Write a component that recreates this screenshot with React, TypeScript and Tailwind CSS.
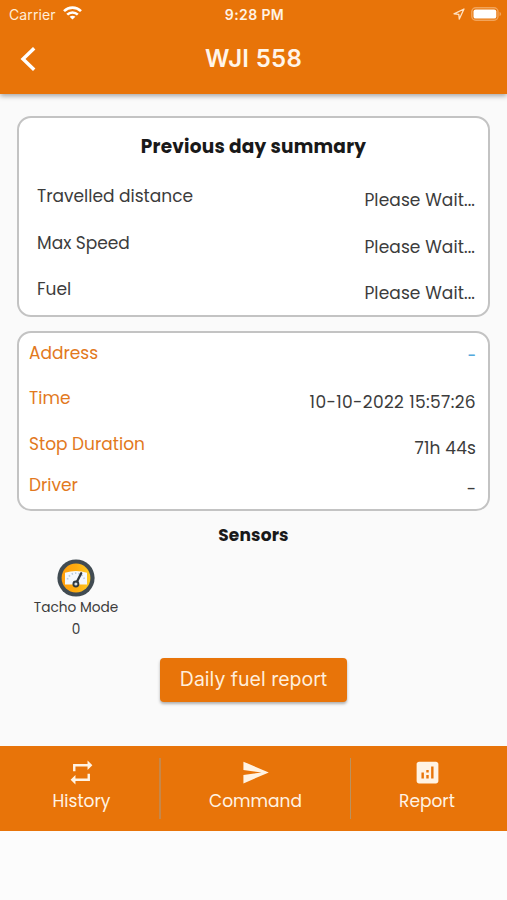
import { ReactNode } from 'react';
import { MdAnalytics, MdRepeat, MdSend } from 'react-icons/md';

const summary = [
  { label: 'Travelled distance', value: 'Please Wait...' },
  { label: 'Max Speed', value: 'Please Wait...' },
  { label: 'Fuel', value: 'Please Wait...' },
];

const details = [
  { label: 'Address', value: '-', height: 'h-[45px]', valueStyle: 'pt-[3px] text-[15px] font-medium text-[#55a9dc]' },
  { label: 'Time', value: '10-10-2022 15:57:26', height: 'h-[46px]', valueStyle: 'pt-1 tracking-[0.37px] text-[#3c3c3c]' },
  { label: 'Stop Duration', value: '71h 44s', height: 'h-[41px]', valueStyle: 'pt-1 tracking-[0.15px] text-[#3c3c3c]' },
  { label: 'Driver', value: '-', height: 'h-[36px]', valueStyle: 'pt-[4px] text-[#3c3c3c]' },
];

function StatusBar() {
  return (
    <div className="grid h-[29px] grid-cols-3 items-center pr-[7px] pl-[9px] font-['Inter',sans-serif] text-[14px] leading-none">
      <div className="flex items-center gap-[7px] text-[#ffedd8]">
        <span className="tracking-[0.1px]">Carrier</span>
        <svg className="-mt-[3px]" width="19" height="14" viewBox="0 0 19 14" fill="none" stroke="#fff" strokeWidth="2.6">
          <path d="M1 5.1C5.8.4 13.2.4 18 5.1" />
          <path d="M4.2 8.6C7.2 5.7 11.8 5.7 14.8 8.6" />
          <path d="M9.5 13.6 6.6 10.8c1.7-1.5 4.1-1.5 5.8 0z" fill="#fff" stroke="none" />
        </svg>
      </div>
      <span className="text-center font-semibold tracking-[0.4px] whitespace-nowrap text-[#fff3e5]">9:28 PM</span>
      <div className="-mt-[2px] flex items-center justify-end gap-[6px]">
        <svg width="12" height="12" viewBox="0 0 12 12" fill="none" stroke="#ffe3c4" strokeWidth="1.3" strokeLinejoin="round">
          <path d="M11 1 1 5.8l4.8.5.5 4.8z" />
        </svg>
        <svg className="-mr-[2px]" width="31" height="14" viewBox="0 0 31 14">
          <rect x=".8" y=".8" width="26.2" height="12.4" rx="4" fill="none" stroke="#f2a45a" strokeWidth="1.4" />
          <rect x="2.5" y="2.4" width="22.8" height="9.2" rx="2.2" fill="#fff" />
          <path d="M28.5 5v4c1-.3 1.6-1 1.6-2s-.6-1.7-1.6-2z" fill="#f2a45a" />
        </svg>
      </div>
    </div>
  );
}

function TachoIcon() {
  return (
    <svg width="38" height="38" viewBox="0 0 38 38">
      <defs>
        <linearGradient id="dial" x1="0" y1="0" x2="1" y2="0">
          <stop offset="0" stopColor="#ff9d0a" />
          <stop offset="0.5" stopColor="#fdab10" />
          <stop offset="1" stopColor="#ffcb21" />
        </linearGradient>
        <clipPath id="face">
          <circle cx="19" cy="19" r="14" />
        </clipPath>
      </defs>
      <circle cx="19" cy="19" r="18.6" fill="#414b52" />
      <circle cx="19" cy="19" r="14.4" fill="url(#dial)" />
      <path d="M8 13.8Q19 10.4 30 13.8V25.6H8z" fill="#f4f8fd" clipPath="url(#face)" />
      <path d="M10.4 20.5a9 9 0 0 1 17.2 0" fill="none" stroke="#b9cbe0" strokeWidth="1.7" strokeDasharray="1.4 2" />
      <path d="m19.8 23 4.4-8.8" stroke="#303940" strokeWidth="2.3" strokeLinecap="round" />
      <circle cx="18.9" cy="25" r="2.5" fill="#d8dfe4" stroke="#303940" strokeWidth="1.9" />
    </svg>
  );
}

function Card({ className, children }: { className: string; children: ReactNode }) {
  return (
    <section className={`mx-[17px] rounded-[14px] border-2 border-[#c3c3c3] bg-white ${className}`}>
      {children}
    </section>
  );
}

function NavItem({ icon, label }: { icon: ReactNode; label: string }) {
  return (
    <button className="flex w-[100px] flex-col items-center justify-self-center pt-[12px] text-[17px] leading-5 text-[#fff3e4]">
      {icon}
      <span className="mt-1">{label}</span>
    </button>
  );
}

export default function App() {
  return (
    <div className="flex h-[900px] w-[507px] flex-col overflow-hidden bg-[#fafafa] font-['Poppins','Inter',sans-serif] text-[#3c3c3c]">
      <header className="h-[94px] shrink-0 bg-[#e87409] shadow-[0_2px_5px_rgba(0,0,0,0.35)]">
        <StatusBar />
        <div className="grid h-[60px] grid-cols-[60px_1fr_60px] items-center">
          <button aria-label="Back" className="pl-5">
            <svg width="16" height="24" viewBox="0 0 16 24" fill="none" stroke="#fff" strokeWidth="3.4">
              <path d="M14.2 1.2 3 12l11.2 10.8" />
            </svg>
          </button>
          <h1 className="text-center font-['Inter',sans-serif] text-[24px] font-semibold tracking-[0.3px] text-[#fff5e9]">
            WJI 558
          </h1>
        </div>
      </header>

      <Card className="mt-[22px] h-[201px] px-[13px] pt-[17px]">
        <h2 className="text-center text-[18.5px] leading-6 font-bold tracking-[0.2px] text-[#191919]">
          Previous day summary
        </h2>
        <div className="mt-[27px] pl-[5px] text-[17px] leading-5">
          {summary.map((row) => (
            <div key={row.label} className="flex h-[46.5px] justify-between">
              <span>{row.label}</span>
              <span className="pt-1 tracking-[0.1px]">{row.value}</span>
            </div>
          ))}
        </div>
      </Card>

      <Card className="mt-[14px] h-[180px] px-[10px] pt-[10px]">
        <div className="text-[17px] leading-5">
          {details.map((row) => (
            <div key={row.label} className={`flex justify-between ${row.height}`}>
              <span className="text-[#e2791d]">{row.label}</span>
              <span className={`pr-[2px] ${row.valueStyle}`}>{row.value}</span>
            </div>
          ))}
        </div>
      </Card>

      <h2 className="mt-[12px] text-center text-[17px] leading-6 font-bold tracking-[0.15px] text-[#191919]">
        Sensors
      </h2>
      <div className="mt-[12px] ml-[21px] flex w-[110px] flex-col items-center text-[13.7px] leading-5">
        <TachoIcon />
        <span className="mt-px">Tacho Mode</span>
        <span className="mt-[2px]">0</span>
      </div>

      <button className="mt-[18px] h-[44px] w-[187px] shrink-0 self-center rounded-[4px] bg-[#e87409] font-['Inter',sans-serif] text-[19.5px] text-[#ffeedb] shadow-[0_2px_3px_rgba(0,0,0,0.3)]">
        Daily fuel report
      </button>

      {/* the outer columns are padded towards the centre */}
      <nav className="mt-[44px] grid h-[85px] shrink-0 grid-cols-[159px_2px_189px_1px_156px] bg-[#e87409]">
        <div className="grid pl-[4px]">
          <NavItem icon={<MdRepeat size={29} />} label="History" />
        </div>
        <div className="my-3 bg-[#c68749]" />
        <NavItem icon={<MdSend size={29} />} label="Command" />
        <div className="my-3 bg-[#b9925f]" />
        <div className="grid pr-[4px]">
          <NavItem icon={<MdAnalytics size={29} />} label="Report" />
        </div>
      </nav>
      <div className="flex-1 bg-[#fcfcfc]" />
    </div>
  );
}
